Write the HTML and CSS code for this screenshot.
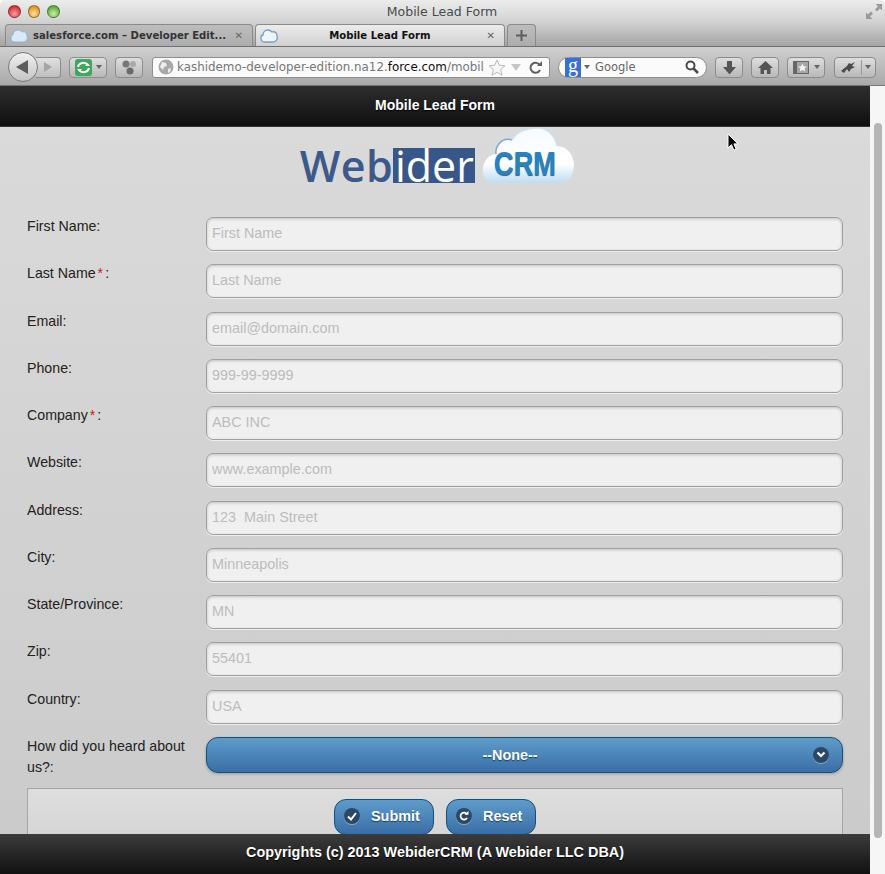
FILE: index.html
```html
<!DOCTYPE html>
<html lang="en">
<head>
  <meta charset="UTF-8">
  <meta name="viewport" content="width=device-width, initial-scale=1.0">
  <title>Mobile Lead Form</title>
  <link rel="stylesheet" href="styles.css">
</head>
<body>

  <div class="screen">
    <div class="chrome">
      <div class="titlebar">
        <div class="lights">
          <span class="light red"></span>
          <span class="light amber"></span>
          <span class="light green"></span>
        </div>
        <div class="window-title">Mobile Lead Form</div>
        <svg class="fullscreen" width="16" height="15" viewBox="0 0 16 15">
          <path d="M9.500 0H16v6.500l-2-2-3 3-2-2 3-3zM6.500 15H0V8.500l2 2 3-3 2 2-3 3z" fill="#9a9a9a"/>
        </svg>
      </div>

      <div class="tabbar">
        <div class="tab">
          <svg class="favicon" width="18" height="14" viewBox="0 0 18 14"><path d="M5 13C2 13 1 11 1 9c0-2 1-3 2-3 0-3 2-5 5-5 2 0 3 1 4 2 3-1 5 1 5 4 1 3-1 6-4 6z" fill="#d9e9f6" stroke="#8fb6d8"/></svg>
          <span class="tab-label">salesforce.com &#8211; Developer Edit...</span>
          <span class="tab-close">&#10005;</span>
        </div>
        <div class="tab active">
          <svg class="favicon" width="18" height="14" viewBox="0 0 18 14"><path d="M5 13C2 13 1 11 1 9c0-2 1-3 2-3 0-3 2-5 5-5 2 0 3 1 4 2 3-1 5 1 5 4 1 3-1 6-4 6z" fill="#eef6fc" stroke="#6f9fca" stroke-width="1.300"/></svg>
          <span class="tab-label">Mobile Lead Form</span>
          <span class="tab-close">&#10005;</span>
        </div>
        <div class="tab new-tab">
          <svg width="13" height="13" viewBox="0 0 13 13"><path d="M6.500 1v11M1 6.500h11" stroke="#5e5e5e" stroke-width="2"/></svg>
        </div>
      </div>

      <div class="toolbar">
        <div class="nav">
          <div class="back">
            <svg width="14" height="16" viewBox="0 0 14 16"><path d="M13 1v14L1 8z" fill="#5c5c5c"/></svg>
          </div>
          <div class="forward">
            <svg width="10" height="12" viewBox="0 0 10 12"><path d="M1 1v10l8-5z" fill="#a4a4a4"/></svg>
          </div>
        </div>
        <div class="tool sync">
          <svg width="17" height="17" viewBox="0 0 17 17">
            <rect width="17" height="17" rx="3" fill="#3fa75a"/>
            <path d="M3 8a5.500 5 0 0 1 10-2M14 9a5.500 5 0 0 1-10 2" fill="none" stroke="#fff" stroke-width="2"/>
            <path d="M10 7h5l-2.500-3zM7 10H2l2.500 3z" fill="#fff"/>
          </svg>
          <span class="caret"></span>
        </div>
        <div class="tool puzzle">
          <svg width="16" height="16" viewBox="0 0 16 16">
            <circle cx="5" cy="5" r="3.500" fill="#777"/>
            <circle cx="12" cy="5" r="3" fill="#a9a9a9"/>
            <circle cx="9" cy="12" r="3.500" fill="#6a6a6a"/>
          </svg>
        </div>
        <div class="url">
          <svg class="globe" width="16" height="16" viewBox="0 0 16 16">
            <circle cx="8" cy="8" r="7.500" fill="#a8a8a8"/>
            <path d="M4 3l4 1 1 3-3 1-1 3-3-3zM10 10l3-1-1 4-2 1z" fill="#ededed"/>
          </svg>
          <span class="url-text">kashidemo-developer-edition.na12.<b>force.com</b>/mobil</span>
          <svg class="star" width="18" height="17" viewBox="0 0 18 17"><path d="M9 1l2.300 5.200 5.700.6-4.300 3.800 1.300 5.600L9 13.300 4 16.200l1.300-5.600L1 6.800l5.700-.6z" fill="#f6f6f6" stroke="#b9b9b9"/></svg>
          <span class="url-caret"></span>
          <svg class="reload" width="13" height="13" viewBox="0 0 13 13"><path d="M11 4.500A5 5 0 1 0 11 9" fill="none" stroke="#606060" stroke-width="2"/><path d="M8 5h5V0z" fill="#606060"/></svg>
        </div>
        <div class="search">
          <span class="search-logo">g</span>
          <span class="caret"></span>
          <span class="search-text">Google</span>
          <svg width="14" height="14" viewBox="0 0 14 14"><circle cx="5.500" cy="5.500" r="4" fill="none" stroke="#4a4a4a" stroke-width="2"/><path d="M8.500 8.500L13 13" stroke="#4a4a4a" stroke-width="2.500"/></svg>
        </div>
        <div class="tool download">
          <svg width="15" height="15" viewBox="0 0 15 15"><path d="M5 1h5v6h4l-6.500 7.500L1 7h4z" fill="#555"/></svg>
        </div>
        <div class="tool home">
          <svg width="17" height="15" viewBox="0 0 17 15"><path d="M8.500 1L1 8h2.500v6h3.500V10h3v4h3.500V8H16z" fill="#555"/></svg>
        </div>
        <div class="tool bookmarks">
          <svg width="18" height="15" viewBox="0 0 18 15">
            <path d="M1 1h16v13H1z" fill="#666"/>
            <path d="M5 2h11v11H5z" fill="#a5a5a5"/>
            <path d="M10.500 3.500l1.300 2.700 3 .3-2.200 2 .6 3-2.700-1.500-2.700 1.500.6-3-2.200-2 3-.3z" fill="#f2f2f2"/>
          </svg>
          <span class="caret"></span>
        </div>
        <div class="tool extras">
          <svg width="18" height="13" viewBox="0 0 18 13"><path d="M1 10l6-5 2-3 2 1 4-2-3 4 3 1-4 2-2 3-2-3-3 4z" fill="#4a4a4a"/></svg>
          <span class="divider"></span>
          <span class="caret"></span>
        </div>
      </div>
    </div>

    <div class="viewport">
      <div class="page">
        <header class="page-header">Mobile Lead Form</header>

        <main class="page-body">
          <div class="logo">
            <span class="logo-web">Web</span><span class="logo-ider">ider</span>
            <span class="logo-cloud">
              <svg width="94" height="58" viewBox="0 0 94 58">
                <defs>
                  <linearGradient id="cloud-fill" x1="0" y1="0" x2="0" y2="1">
                    <stop offset="0" stop-color="#f6fafd"/>
                    <stop offset="0.65" stop-color="#ffffff"/>
                    <stop offset="1" stop-color="#bedcf1"/>
                  </linearGradient>
                </defs>
                <path d="M12 55C3 55 0 47 1 40 2 31 8 27 14 26 13 18 20 9 30 12 35 3 46 0 55 0 66 0 73 8 75 18 85 18 92 27 92 37 92 48 85 55 78 55z" fill="url(#cloud-fill)"/>
                <path d="M14 26C13 18 20 9 30 12" fill="none" stroke="#7fa9d6" stroke-width="1.500"/>
                <path d="M30 12C35 3 46 0 55 0 66 0 73 8 75 18" fill="none" stroke="#cfe2f3" stroke-width="1.500"/>
              </svg>
              <span class="logo-crm">CRM</span>
            </span>
          </div>

          <form class="lead-form">
            <div class="field">
              <label for="first-name">First Name:</label>
              <input type="text" id="first-name" placeholder="First Name">
            </div>
            <div class="field">
              <label for="last-name">Last Name<span class="req">*</span>:</label>
              <input type="text" id="last-name" placeholder="Last Name">
            </div>
            <div class="field">
              <label for="email">Email:</label>
              <input type="text" id="email" placeholder="email@domain.com">
            </div>
            <div class="field">
              <label for="phone">Phone:</label>
              <input type="text" id="phone" placeholder="999-99-9999">
            </div>
            <div class="field">
              <label for="company">Company<span class="req">*</span>:</label>
              <input type="text" id="company" placeholder="ABC INC">
            </div>
            <div class="field">
              <label for="website">Website:</label>
              <input type="text" id="website" placeholder="www.example.com">
            </div>
            <div class="field">
              <label for="address">Address:</label>
              <input type="text" id="address" placeholder="123  Main Street">
            </div>
            <div class="field">
              <label for="city">City:</label>
              <input type="text" id="city" placeholder="Minneapolis">
            </div>
            <div class="field">
              <label for="state">State/Province:</label>
              <input type="text" id="state" placeholder="MN">
            </div>
            <div class="field">
              <label for="zip">Zip:</label>
              <input type="text" id="zip" placeholder="55401">
            </div>
            <div class="field">
              <label for="country">Country:</label>
              <input type="text" id="country" placeholder="USA">
            </div>
            <div class="field">
              <label>How did you heard about us?:</label>
              <div class="select">
                <span class="select-text">--None--</span>
                <span class="round-icon select-icon">
                  <svg width="10" height="8" viewBox="0 0 10 8"><path d="M1.500 1.500L5 5l3.500-3.500" fill="none" stroke="#fff" stroke-width="2.200"/></svg>
                </span>
              </div>
            </div>

            <div class="actions">
              <button type="button" class="btn btn-submit">
                <span class="round-icon">
                  <svg width="10" height="9" viewBox="0 0 10 9"><path d="M1 4.500L4 7.500 9 1" fill="none" stroke="#fff" stroke-width="2"/></svg>
                </span>
                Submit
              </button>
              <button type="button" class="btn btn-reset">
                <span class="round-icon">
                  <svg width="10" height="10" viewBox="0 0 10 10"><path d="M8 3.200A3.500 3.500 0 1 0 8 7" fill="none" stroke="#fff" stroke-width="1.700"/><path d="M5.500 3.800H9.500V0z" fill="#fff"/></svg>
                </span>
                Reset
              </button>
            </div>
          </form>
        </main>

        <footer class="page-footer">Copyrights (c) 2013 WebiderCRM (A Webider LLC DBA)</footer>
      </div>

      <div class="scrollbar"><div class="scroll-thumb"></div></div>
    </div>

    <svg class="pointer" width="12" height="19" viewBox="0 0 12 19">
      <path d="M1 1v14l3.500-3.300 2.300 5.500 2.400-1-2.300-5.300H11z" fill="#000" stroke="#fff"/>
    </svg>
  </div>

</body>
</html>
```

FILE: styles.css
```css
* {
  box-sizing: border-box;
}

html, body {
  margin: 0;
  padding: 0;
  height: 100%;
  overflow: hidden;
}

body {
  font-family: "Liberation Sans", Arial, sans-serif;
  font-size: 14px;
  color: #222;
}

.screen {
  position: relative;
  display: flex;
  flex-direction: column;
  height: 100vh;
}

/* browser window */
.chrome {
  flex: none;
  height: 86px;
  font-family: "DejaVu Sans", sans-serif;
  color: #333;
}

.titlebar {
  display: flex;
  align-items: center;
  height: 22px;
  padding: 1px 3px 0 8px;
  background: linear-gradient(#ececec, #d2d2d2);
  border-radius: 5px 5px 0 0;
}

.lights {
  display: flex;
  gap: 7px;
  width: 52px;
  flex: none;
}

.light {
  width: 13px;
  height: 13px;
  border-radius: 50%;
  border: 1px solid rgba(0, 0, 0, 0.35);
}

.light.red {
  background: radial-gradient(circle at 50% 70%, #f9a0a0, #d9343a 70%);
}

.light.amber {
  background: radial-gradient(circle at 50% 70%, #fbe29a, #e2992c 70%);
}

.light.green {
  background: radial-gradient(circle at 50% 70%, #cdeeaa, #62ae3f 70%);
}

.window-title {
  flex: 1;
  text-align: center;
  font-size: 12.500px;
  padding-right: 42px;
  color: #4a4a4a;
}

.fullscreen {
  flex: none;
}

.tabbar {
  display: flex;
  align-items: flex-end;
  gap: 2px;
  height: 25px;
  padding: 3px 0 0 5px;
  background: linear-gradient(#d2d2d2, #a4a4a4);
  border-bottom: 1px solid #6e6e6e;
}

.tab {
  display: flex;
  align-items: center;
  width: 248px;
  height: 22px;
  padding: 0 9px 0 4px;
  font-size: 10.100px;
  font-weight: bold;
  background: linear-gradient(#bdbdbd, #adadad);
  border: 1px solid #8a8a8a;
  border-bottom: none;
  border-radius: 4px 4px 0 0;
}

.tab.active {
  width: 250px;
  background: linear-gradient(#ececec, #d0d0d0);
  color: #111;
}

.tab.active .tab-label {
  text-align: center;
  padding-right: 10px;
}

.tab-label {
  flex: 1;
  white-space: nowrap;
  overflow: hidden;
  margin-left: 5px;
}

.tab-close {
  font-size: 10px;
  color: #666;
}

.favicon {
  flex: none;
}

.tab.new-tab {
  width: 29px;
  justify-content: center;
  padding: 0;
}

.toolbar {
  display: flex;
  align-items: center;
  height: 39px;
  padding: 2px 9px 0 8px;
  background: linear-gradient(#d0d0d0, #a9a9a9);
  border-bottom: 1px solid #777;
}

.nav {
  display: flex;
  align-items: center;
  width: 53px;
  margin-right: 8px;
}

.back {
  display: flex;
  align-items: center;
  justify-content: center;
  position: relative;
  z-index: 1;
  width: 30px;
  height: 30px;
  padding-right: 3px;
  border-radius: 50%;
  border: 1px solid #7a7a7a;
  background: linear-gradient(#f0f0f0, #c4c4c4);
}

.forward {
  display: flex;
  align-items: center;
  justify-content: center;
  width: 25px;
  height: 21px;
  margin-left: -2px;
  border: 1px solid #8c8c8c;
  border-left: none;
  border-radius: 0 4px 4px 0;
  background: linear-gradient(#e0e0e0, #bfbfbf);
}

.tool {
  display: flex;
  align-items: center;
  justify-content: center;
  gap: 4px;
  height: 21px;
  border: 1px solid #8c8c8c;
  border-radius: 4px;
  background: linear-gradient(#dedede, #b8b8b8);
}

.caret {
  width: 0;
  height: 0;
  border-left: 3.500px solid transparent;
  border-right: 3.500px solid transparent;
  border-top: 4px solid #666;
}

.sync {
  width: 38px;
  margin-right: 8px;
}

.puzzle {
  width: 28px;
  margin-right: 9px;
}

.url {
  display: flex;
  align-items: center;
  width: 398px;
  height: 21px;
  margin-right: 8px;
  padding: 0 7px 0 5px;
  background: #fbfbfb;
  border: 1px solid #8e8e8e;
  border-radius: 3px;
  font-size: 11.900px;
  color: #777;
}

.globe {
  flex: none;
  margin-right: 3px;
}

.url-text {
  flex: 1;
  white-space: nowrap;
  overflow: hidden;
}

.url-text b {
  font-weight: normal;
  color: #111;
}

.url-caret {
  width: 0;
  height: 0;
  margin: 0 8px 0 5px;
  border-left: 5px solid transparent;
  border-right: 5px solid transparent;
  border-top: 7px solid #c6c6c6;
}

.search {
  display: flex;
  align-items: center;
  gap: 3px;
  width: 149px;
  height: 21px;
  margin-right: 8px;
  padding: 0 7px 0 6px;
  background: #fbfbfb;
  border: 1px solid #8e8e8e;
  border-radius: 11px;
  font-size: 11.500px;
  color: #666;
}

.search-logo {
  width: 16px;
  height: 19px;
  background: #3b6fd8;
  color: #fff;
  font-family: "Liberation Serif", serif;
  font-size: 20px;
  line-height: 15px;
  text-align: center;
}

.search-text {
  flex: 1;
  margin-left: 2px;
}

.download, .home {
  width: 28px;
  margin-right: 8px;
}

.bookmarks {
  width: 38px;
  margin-right: 9px;
}

.extras {
  width: 42px;
  gap: 3px;
}

.divider {
  width: 1px;
  height: 15px;
  background: #999;
}

/* page inside the browser */
.viewport {
  flex: 1;
  min-height: 0;
  display: flex;
}

.page {
  flex: 1;
  min-width: 0;
  display: flex;
  flex-direction: column;
}

.page-header, .page-footer {
  flex: none;
  color: #fff;
  font-weight: bold;
  text-align: center;
  text-shadow: 0 1px 1px #000;
  background: linear-gradient(#3c3c3c, #111);
}

.page-header {
  height: 41px;
  line-height: 38px;
  border-bottom: 1px solid #333;
  background: linear-gradient(#2e2e2e, #0f0f0f);
}

.page-footer {
  height: 40px;
  line-height: 36px;
  font-size: 14.400px;
}

.page-body {
  flex: 1;
  min-height: 0;
  overflow: hidden;
  padding: 1px 27px 0;
  background: linear-gradient(#dadada, #cbcbcb);
}

.logo {
  display: flex;
  align-items: flex-end;
  justify-content: center;
  height: 58px;
  margin-bottom: 30px;
  padding-left: 6px;
}

.logo-web, .logo-ider {
  font-family: "Open Sans", sans-serif;
  font-size: 43px;
  line-height: 35px;
  height: 35px;
  margin-bottom: 3px;
}

.logo-web {
  color: #3c5a89;
  font-weight: 600;
  letter-spacing: 0.5px;
}

.logo-ider {
  width: 82px;
  text-align: center;
  background: #37578a;
  color: #fff;
  font-weight: 400;
}

.logo-cloud {
  position: relative;
  width: 94px;
  height: 58px;
  margin-left: 7px;
}

.logo-crm {
  position: absolute;
  left: 12px;
  top: 21px;
  font-family: "Liberation Sans", sans-serif;
  font-weight: bold;
  font-size: 34px;
  line-height: 28px;
  color: #2a82bd;
  text-shadow: 0 1px 1px #1b5f94;
  transform: scaleX(0.8);
  transform-origin: left;
}

/* form rows */
.field {
  display: flex;
  align-items: flex-start;
  height: 47.270px;
}

.field label {
  flex: none;
  width: 179px;
  padding-right: 15px;
  font-size: 14.200px;
  line-height: 21px;
  color: #222;
}

.req {
  color: #e01010;
  margin: 0 2px;
}

.field input {
  flex: 1;
  min-width: 0;
  height: 34px;
  margin-top: 1px;
  padding: 0 5px 2px;
  font-family: inherit;
  font-size: 14.400px;
  color: #222;
  background: #f0f0f0;
  border: 1px solid #a0a0a0;
  border-radius: 7px;
  box-shadow: inset 0 1px 3px rgba(0, 0, 0, 0.2), 0 1px 0 #eee;
  outline: none;
}

.field input::placeholder {
  color: #bcbcbc;
  opacity: 1;
}

.select {
  flex: 1;
  display: flex;
  align-items: center;
  height: 36px;
  margin-top: 1px;
  padding: 0 13px 0 0;
  border: 1px solid #145072;
  border-radius: 12px;
  background: linear-gradient(#5e9ccb, #3a6ea5);
  box-shadow: 0 1px 3px rgba(0, 0, 0, 0.25);
}

.select-text {
  flex: 1;
  text-align: center;
  color: #fff;
  font-weight: bold;
  font-size: 14.400px;
  text-shadow: 0 1px 1px #14436b;
}

.round-icon {
  display: flex;
  align-items: center;
  justify-content: center;
  flex: none;
  width: 16px;
  height: 16px;
  border-radius: 50%;
  background: #2a4868;
  box-shadow: 0 1px 0 rgba(255, 255, 255, 0.35);
}

.actions {
  display: flex;
  justify-content: center;
  gap: 12px;
  height: 70px;
  margin-top: 5px;
  padding-top: 10px;
  border: 1px solid #a6a6a6;
  background: linear-gradient(#dedede, #d2d2d2);
}

.btn {
  display: flex;
  align-items: center;
  height: 36px;
  padding: 0 0 2px 9px;
  font-family: inherit;
  font-size: 14.400px;
  font-weight: bold;
  color: #fff;
  text-shadow: 0 1px 1px #14436b;
  border: 1px solid #145072;
  border-radius: 12px;
  background: linear-gradient(#5e9ccb, #3a6ea5);
}

.btn .round-icon {
  margin-right: 11px;
}

.btn-submit {
  width: 100px;
}

.btn-reset {
  width: 90px;
}

.scrollbar {
  flex: none;
  width: 15px;
  padding: 37px 3px 0 4px;
  background: #f6f6f6;
}

.scroll-thumb {
  height: 715px;
  background: #b5b5b5;
  border-radius: 4px;
}

/* mouse pointer in the shot */
.pointer {
  position: absolute;
  left: 727px;
  top: 133px;
}
```
